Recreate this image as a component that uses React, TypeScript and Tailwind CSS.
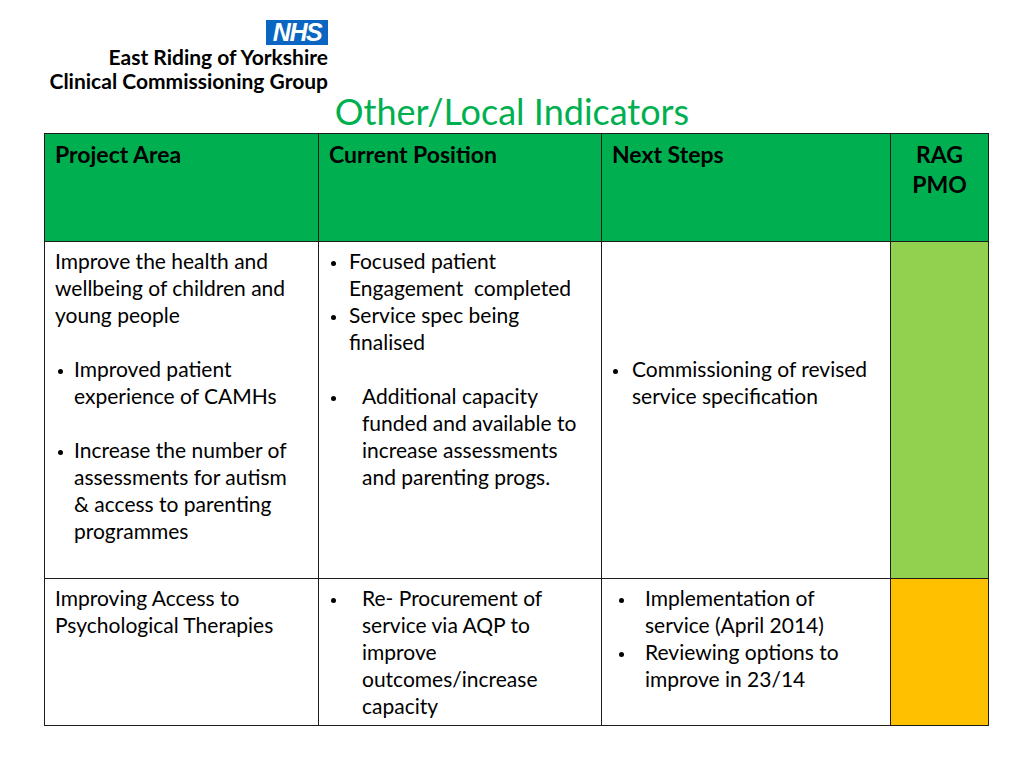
import React from "react";

type BProps = { w: string; ml: string; children: React.ReactNode };

const Bullet = ({ w, ml, children }: BProps) => (
  <div className="flex">
    <div className={`${w} shrink-0 flex`}>
      <span className={`${ml} mt-[14px] w-[5px] h-[5px] rounded-full bg-black`} />
    </div>
    <div className="whitespace-nowrap">{children}</div>
  </div>
);

const Blank = () => <div className="h-[27px]" />;

export default function App() {
  return (
    <div className="w-[1024px] h-[768px] bg-white text-black font-['Lato',sans-serif] overflow-hidden">
      <div className="h-[133px] flex flex-col">
        <div className="w-[328px] pt-[20px] flex flex-col items-end">
          <div className="w-[62px] h-[25px] bg-[#0a66c2] flex items-center justify-center">
            <span className="font-['Liberation_Sans',sans-serif] font-bold italic text-white text-[25px] leading-none tracking-[-1.5px]">NHS</span>
          </div>
          <div className="mt-[0px] text-right font-['Lato',sans-serif] font-bold text-[21px] leading-[24px] whitespace-nowrap">
            <div>East Riding of Yorkshire</div>
            <div>Clinical Commissioning Group</div>
          </div>
        </div>
        <div className="mt-auto pb-[13px] text-center text-[#00b050] text-[36px] leading-none">
          Other/Local Indicators
        </div>
      </div>
      <table className="ml-[44px] border-collapse table-fixed text-[21px] leading-[27px]">
        <colgroup>
          <col className="w-[274px]" />
          <col className="w-[283px]" />
          <col className="w-[289px]" />
          <col className="w-[98px]" />
        </colgroup>
        <tbody>
          <tr className="h-[108px] bg-[#00b050] font-bold text-[23px] leading-[30px]">
            <td className="border-[1.5px] border-[#1c1c1c] align-top pt-[5px] px-[10px]">Project Area</td>
            <td className="border-[1.5px] border-[#1c1c1c] align-top pt-[5px] px-[10px]">Current Position</td>
            <td className="border-[1.5px] border-[#1c1c1c] align-top pt-[5px] px-[10px]">Next Steps</td>
            <td className="border-[1.5px] border-[#1c1c1c] align-top pt-[5px] text-center">
              RAG
              <br />
              PMO
            </td>
          </tr>
          <tr className="h-[337px]">
            <td className="border-[1.5px] border-[#1c1c1c] align-top pt-[5px] pl-[10px]">
              <div className="whitespace-nowrap">Improve the health and</div>
              <div className="whitespace-nowrap">wellbeing of children and</div>
              <div className="whitespace-nowrap">young people</div>
              <Blank />
              <Bullet w="w-[19px]" ml="ml-[3px]">
                Improved patient
                <br />
                experience of CAMHs
              </Bullet>
              <Blank />
              <Bullet w="w-[19px]" ml="ml-[3px]">
                Increase the number of
                <br />
                assessments for autism
                <br />
                &amp; access to parenting
                <br />
                programmes
              </Bullet>
            </td>
            <td className="border-[1.5px] border-[#1c1c1c] align-top pt-[5px] pl-[11px]">
              <Bullet w="w-[19px]" ml="ml-[1px]">
                Focused patient
                <br />
                Engagement&nbsp; completed
              </Bullet>
              <Bullet w="w-[19px]" ml="ml-[1px]">
                Service spec being
                <br />
                finalised
              </Bullet>
              <Blank />
              <Bullet w="w-[32px]" ml="ml-[1px]">
                Additional capacity
                <br />
                funded and available to
                <br />
                increase assessments
                <br />
                and parenting progs.
              </Bullet>
            </td>
            <td className="border-[1.5px] border-[#1c1c1c] align-top pt-[5px] pl-[10px]">
              <Blank />
              <Blank />
              <Blank />
              <Blank />
              <Bullet w="w-[20px]" ml="ml-[1px]">
                Commissioning of revised
                <br />
                service specification
              </Bullet>
            </td>
            <td className="border-[1.5px] border-[#1c1c1c] bg-[#92d050]" />
          </tr>
          <tr className="h-[147px]">
            <td className="border-[1.5px] border-[#1c1c1c] align-top pt-[5px] pl-[10px]">
              <div className="whitespace-nowrap">Improving Access to</div>
              <div className="whitespace-nowrap">Psychological Therapies</div>
            </td>
            <td className="border-[1.5px] border-[#1c1c1c] align-top pt-[5px] pl-[11px]">
              <Bullet w="w-[32px]" ml="ml-[1px]">
                Re- Procurement of
                <br />
                service via AQP to
                <br />
                improve
                <br />
                outcomes/increase
                <br />
                capacity
              </Bullet>
            </td>
            <td className="border-[1.5px] border-[#1c1c1c] align-top pt-[5px] pl-[10px]">
              <Bullet w="w-[33px]" ml="ml-[7px]">
                Implementation of
                <br />
                service (April 2014)
              </Bullet>
              <Bullet w="w-[33px]" ml="ml-[7px]">
                Reviewing options to
                <br />
                improve in 23/14
              </Bullet>
            </td>
            <td className="border-[1.5px] border-[#1c1c1c] bg-[#ffc000]" />
          </tr>
        </tbody>
      </table>
    </div>
  );
}
